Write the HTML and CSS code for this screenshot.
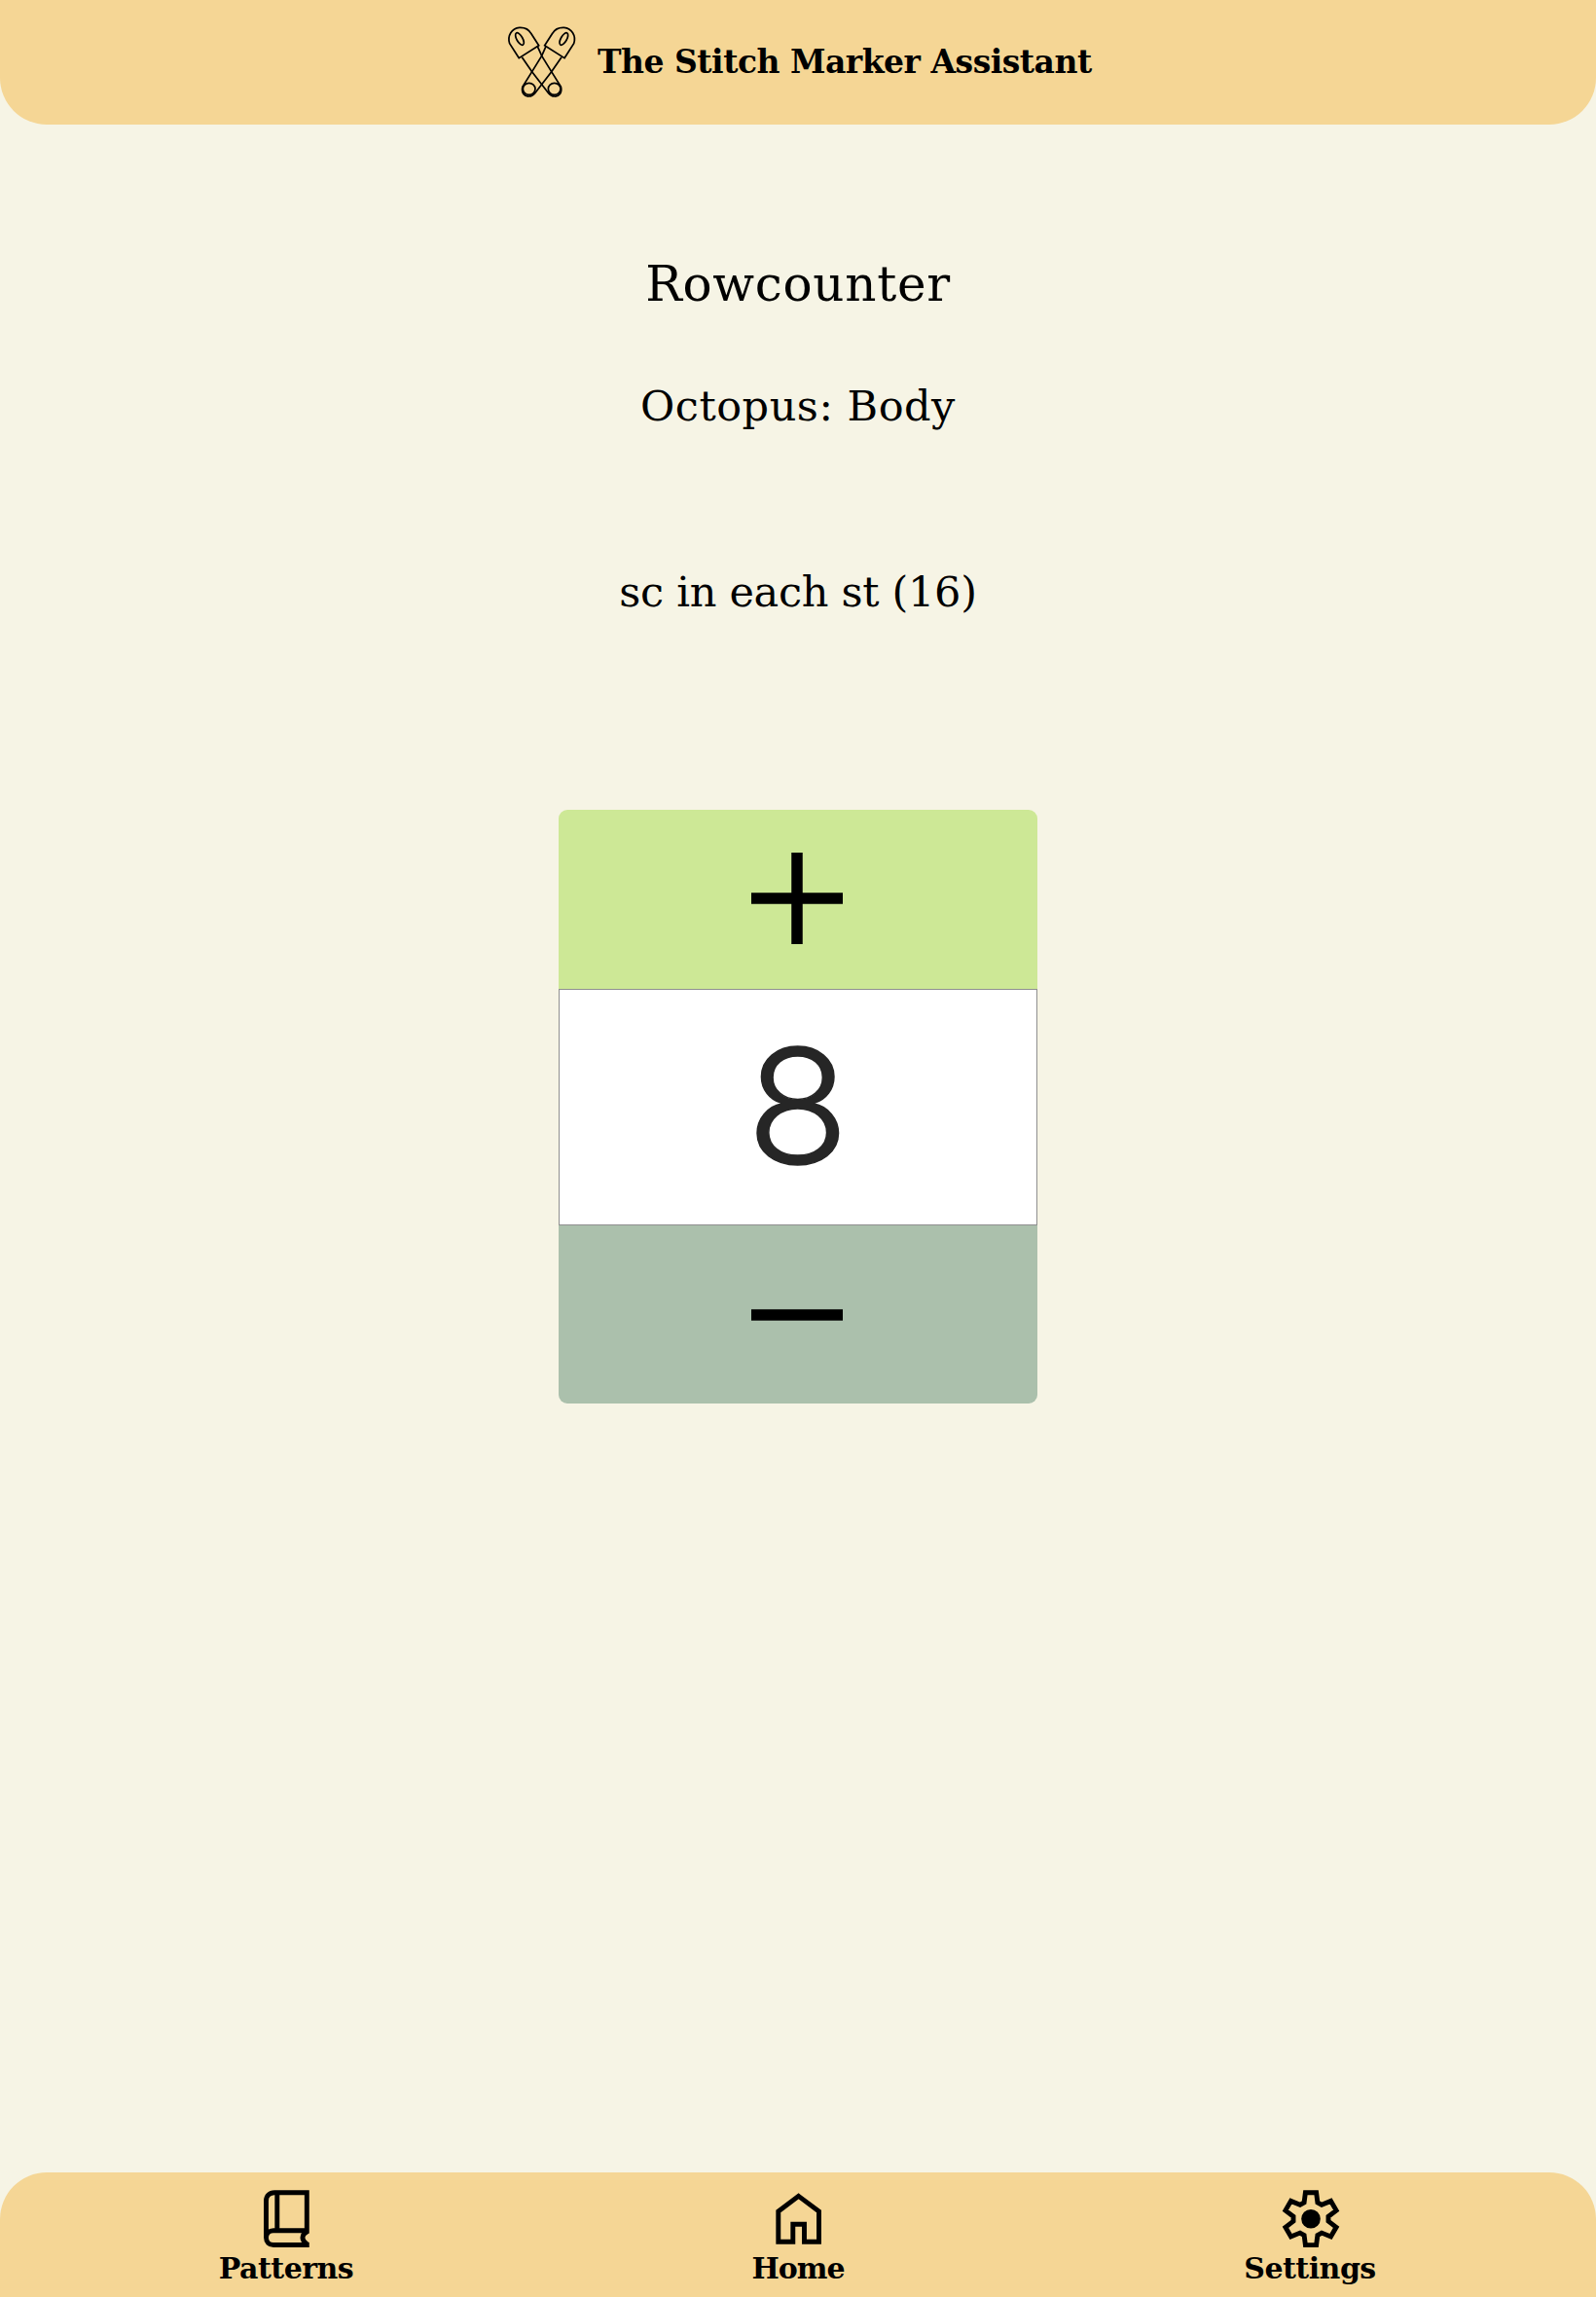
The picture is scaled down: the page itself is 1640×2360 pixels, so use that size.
FILE: index.html
```html
<!DOCTYPE html>
<html lang="en">
<head>
<meta charset="utf-8">
<title>The Stitch Marker Assistant</title>
<link rel="stylesheet" href="styles.css">
</head>
<body>
<header class="header">
  <svg class="logo" viewBox="24 0 276 285" aria-hidden="true">
    <g id="pin">
      <path d="M70 134 L41 89 C33 65 48 42 71 40 C89 39 101 47 107 58 L131 95 Z"/>
      <ellipse cx="72" cy="75" rx="9" ry="21" transform="rotate(-30 72 75)"/>
      <path d="M79 131 L110 176 L162 244 M127 98 L140 127 L170 176 L199 222 C204 241 193 253 180 252 C170 252 165 248 160 240"/>
      <ellipse cx="179" cy="229" rx="19" ry="18"/>
    </g>
    <use href="#pin" transform="translate(280 0) scale(-1 1)"/>
  </svg>
  <span class="title">The Stitch Marker Assistant</span>
</header>
<main class="main">
  <h1 class="heading">Rowcounter</h1>
  <h2 class="part">Octopus: Body</h2>
  <p class="instruction">sc in each st (16)</p>
  <div class="counter">
    <button class="step plus" aria-label="Increase"><svg viewBox="0 0 94 94"><path d="M0 47H94M47 0V94"/></svg></button>
    <output class="count"><span class="digits">8</span></output>
    <button class="step minus" aria-label="Decrease"><svg viewBox="0 0 94 94"><path d="M0 47H94"/></svg></button>
  </div>
</main>
<nav class="nav">
  <a class="item patterns">
    <svg viewBox="0 0 64 64"><path d="M11.5 51V13C11.5 8 15 4.8 20 4.8H53.3V43.7H19C14.5 43.7 11.5 47 11.5 51C11.5 55.5 14.5 58.5 19 58.5H53.3M22.8 4.8V43.7M53.3 43.7V45C47.5 48 47.5 54 53.3 57.5V61"/></svg>
    <span>Patterns</span>
  </a>
  <a class="item home">
    <svg viewBox="0 0 64 64"><path d="M32.6 8.4L53.5 24V55.2H38.5V37.2H26.8V55.2H11.8V24Z"/></svg>
    <span>Home</span>
  </a>
  <a class="item settings">
    <svg viewBox="0 0 64 64"><path d="M26.1 14.9L27.4 4.8H38.6L39.9 14.9L44.1 17.3L53.5 13.4L59.1 23.1L51 29.3V34.1L59.1 40.3L53.5 50L44.1 46.1L39.9 48.5L38.6 58.6H27.4L26.1 48.5L21.9 46.1L12.5 50L6.9 40.3L15 34.1V29.3L6.9 23.1L12.5 13.4L21.9 17.3Z"/><circle class="hub" cx="33" cy="31.7" r="9.8"/></svg>
    <span>Settings</span>
  </a>
</nav>
</body>
</html>
```
FILE: styles.css
```css
* { box-sizing: border-box; }
body {
  margin: 0;
  height: 2360px;
  display: flex;
  flex-direction: column;
  background: #f6f4e5;
  color: #000;
  font-family: "DejaVu Serif", serif;
  white-space: nowrap;
}
.header {
  height: 128px;
  display: flex;
  justify-content: center;
  gap: 4px;
  background: #f5d695;
  border-radius: 0 0 48px 48px;
}
.logo {
  width: 92px;
  height: 95px;
  margin-top: 15px;
  fill: none;
  stroke: #000;
  stroke-width: 5.2;
}
.title {
  width: 508px;
  font: bold 33px/40px "DejaVu Serif", serif;
  letter-spacing: -0.5px;
  margin-top: 44px;
}
.main {
  flex: 1;
  display: flex;
  flex-direction: column;
  align-items: center;
}
.heading, .part, .instruction { margin: 0; font-weight: 400; line-height: 60px; }
.heading { font-size: 50px; margin-top: 134px; letter-spacing: 0.7px; }
.part { font-size: 43px; margin-top: 65px; letter-spacing: 0.5px; }
.instruction { font-size: 43px; margin-top: 131px; letter-spacing: -0.3px; }
.counter {
  width: 492px;
  height: 610px;
  margin-top: 194px;
  display: flex;
  flex-direction: column;
  border-radius: 9px;
  overflow: hidden;
}
.step {
  height: 184px;
  padding: 0 2px 2px 0;
  border: 0;
  display: flex;
  align-items: center;
  justify-content: center;
}
.step svg { width: 94px; height: 94px; stroke: #000; stroke-width: 11.5; }
.plus { background: #cde896; }
.minus { background: #abc0ac; height: 183px; padding-bottom: 0; }
.count {
  height: 243px;
  padding-bottom: 5px;
  display: flex;
  align-items: center;
  justify-content: center;
  background: #fff;
  border: 1px solid #8f8f8f;
  color: #262626;
  font: 300 163px/1 Inter, sans-serif;
}
.digits { transform: scaleX(1.06); -webkit-text-stroke: 1.4px #262626; }
.nav {
  height: 128px;
  padding: 0 31px;
  display: grid;
  grid-template-columns: repeat(3, 1fr);
  background: #f5d695;
  border-radius: 48px 48px 0 0;
}
.item {
  display: flex;
  flex-direction: column;
  align-items: center;
  padding-top: 16px;
  font: bold 30px/38px "DejaVu Serif", serif;
  letter-spacing: -0.5px;
}
.item svg { width: 64px; height: 64px; fill: none; stroke: #000; stroke-width: 4.9; }
.item .hub { fill: #000; stroke: none; }
.home { letter-spacing: -1.1px; }
```
